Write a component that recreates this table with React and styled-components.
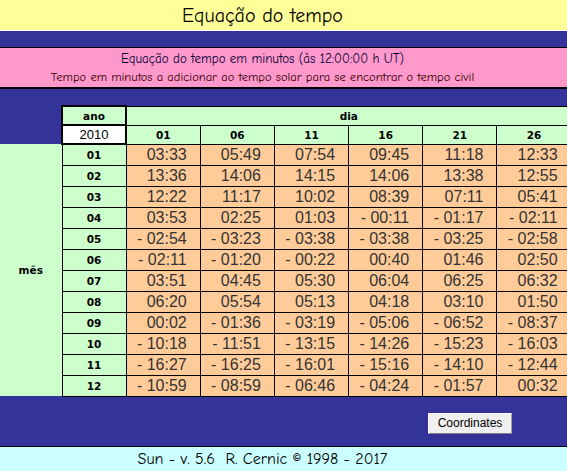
import React from 'react';
import styled, { createGlobalStyle } from 'styled-components';

const comic = `"Comic Sans MS", "Comic Neue", Lato, sans-serif`;
const headFont = `"DejaVu Sans", Verdana, sans-serif`;

const GlobalStyle = createGlobalStyle`
html, body{
    margin: 0;
    padding: 0;
    background: #333399;
}
`;

const Page = styled.div`
width: 567px;
height: 471px;
overflow: hidden;
display: flex;
flex-direction: column;
font-family: ${comic};
`;
const TitleBar = styled.div`
height: 30px;
padding-right: 42px;
background: #ffff99;
border-bottom: 1px solid #ffffff;
display: flex;
align-items: center;
justify-content: center;
font-size: 20px;
color: #000;
`;
const Main = styled.div`
flex: 1;
display: flex;
flex-direction: column;
background: #333399;
padding-top: 16px;
`;
const Banner = styled.div`
background: #ff99cc;
border-top: 1px solid #000;
border-bottom: 2px solid #000;
height: 39px;
padding-right: 42px;
display: flex;
flex-direction: column;
justify-content: center;
align-items: center;
line-height: 19px;
`;
const BannerLine = styled.div`
color: ${props => props.color ?? '#000'};
font-size: ${props => props.size ?? 13}px;
`;
const TableWrap = styled.div`
margin-top: 16px;
width: 567px;
overflow: hidden;
`;
const Table = styled.table`
width: 571px;
table-layout: fixed;
border-collapse: collapse;
`;
const Cell = styled.td`
padding: 0;
border: 1px solid #000;
background: #ccffcc;
text-align: center;
font-family: ${headFont};
font-size: 10.5px;
font-weight: 700;
color: #000;
`;
const Corner = styled.td`
padding: 0;
border: none;
background: #333399;
`;
const YearCell = styled(Cell)`
border: 2px solid #000;
`;
const YearValue = styled(YearCell)`
background: #ffffff;
font-family: "Liberation Sans", Arial, sans-serif;
font-weight: 400;
font-size: 13px;
`;
const MonthSide = styled(Cell)`
border: none;
border-right: 1px solid #000;
`;
const Value = styled.td`
padding: 0 13px 0 0;
border: 1px solid #000;
background: #ffcc99;
text-align: right;
font-family: "Liberation Sans", Arial, sans-serif;
font-size: 16px;
color: #333;
white-space: pre;
`;
const HeadRow = styled.tr`
height: 19px;
`;
const Row = styled.tr`
height: 21px;
`;
const ButtonBar = styled.div`
flex: 1;
display: flex;
justify-content: flex-end;
align-items: flex-start;
padding: 16px 55px 0 0;
`;
const Button = styled.button`
width: 84px;
height: 21px;
padding: 0;
background: #f0f0f0;
border: 1px solid;
border-color: #ffffff #a0a0a0 #808080 #ffffff;
font-family: "Liberation Sans", Arial, sans-serif;
font-size: 12px;
color: #000;
`;
const Footer = styled.div`
height: 24px;
padding-right: 42px;
border-top: 1px solid #000;
background: #ccffff;
display: flex;
align-items: center;
justify-content: center;
font-size: 16px;
color: #000;
`;

const days = ['01', '06', '11', '16', '21', '26'];
const data = [
    ['03:33', '05:49', '07:54', '09:45', '11:18', '12:33'],
    ['13:36', '14:06', '14:15', '14:06', '13:38', '12:55'],
    ['12:22', '11:17', '10:02', '08:39', '07:11', '05:41'],
    ['03:53', '02:25', '01:03', '-00:11', '-01:17', '-02:11'],
    ['-02:54', '-03:23', '-03:38', '-03:38', '-03:25', '-02:58'],
    ['-02:11', '-01:20', '-00:22', '00:40', '01:46', '02:50'],
    ['03:51', '04:45', '05:30', '06:04', '06:25', '06:32'],
    ['06:20', '05:54', '05:13', '04:18', '03:10', '01:50'],
    ['00:02', '-01:36', '-03:19', '-05:06', '-06:52', '-08:37'],
    ['-10:18', '-11:51', '-13:15', '-14:26', '-15:23', '-16:03'],
    ['-16:27', '-16:25', '-16:01', '-15:16', '-14:10', '-12:44'],
    ['-10:59', '-08:59', '-06:46', '-04:24', '-01:57', '00:32'],
];

const fmt = v => v.startsWith('-') ? `- ${v.slice(1)}` : v;

export default function App(){
    return (
        <Page>
            <GlobalStyle />
            <TitleBar>Equação do tempo</TitleBar>
            <Main>
                <Banner>
                    <BannerLine color="#000033">Equação do tempo em minutos (às 12:00:00 h UT)</BannerLine>
                    <BannerLine color="#330000" size={12.5}>Tempo em minutos a adicionar ao tempo solar para se encontrar o tempo civil</BannerLine>
                </Banner>
                <TableWrap>
                    <Table>
                        <colgroup>
                            <col style={{ width: 62 }} />
                            <col style={{ width: 64 }} />
                            {days.map(d => <col key={d} style={{ width: 74.2 }} />)}
                        </colgroup>
                        <tbody>
                            <HeadRow>
                                <Corner rowSpan={2} />
                                <YearCell>ano</YearCell>
                                <Cell colSpan={6}>dia</Cell>
                            </HeadRow>
                            <HeadRow>
                                <YearValue>2010</YearValue>
                                {days.map(d => <Cell key={d}>{d}</Cell>)}
                            </HeadRow>
                            {data.map((row, i) => {
                                const month = String(i + 1).padStart(2, '0');
                                return (
                                    <Row key={month}>
                                        {i === 0 && <MonthSide rowSpan={12}>mês</MonthSide>}
                                        <Cell>{month}</Cell>
                                        {row.map((v, j) => <Value key={j}>{fmt(v)}</Value>)}
                                    </Row>
                                );
                            })}
                        </tbody>
                    </Table>
                </TableWrap>
                <ButtonBar>
                    <Button>Coordinates</Button>
                </ButtonBar>
            </Main>
            <Footer>Sun - v. 5.6&nbsp;&nbsp;R. Cernic © 1998 - 2017</Footer>
        </Page>
    );
}
